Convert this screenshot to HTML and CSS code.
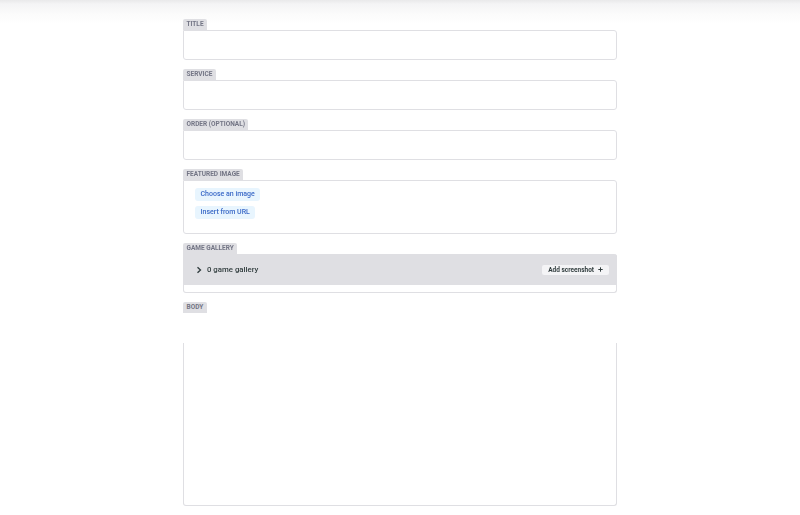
FILE: index.html
```html
<!DOCTYPE html>
<html>
<head>
<meta charset="utf-8">
<link rel="stylesheet" href="styles.css">
</head>
<body>
<div class="top-shadow"></div>
<main class="editor">
  <div class="field">
    <label class="label">Title</label>
    <div class="input"></div>
  </div>
  <div class="field">
    <label class="label">Service</label>
    <div class="input"></div>
  </div>
  <div class="field">
    <label class="label">Order (optional)</label>
    <div class="input"></div>
  </div>
  <div class="field">
    <label class="label">Featured image</label>
    <div class="input image-box">
      <span class="link-btn">Choose an image</span>
      <span class="link-btn">Insert from URL</span>
    </div>
  </div>
  <div class="field">
    <label class="label">Game gallery</label>
    <div class="list-box">
      <div class="list-head">
        <div class="list-title">
          <svg class="chev" viewBox="0 0 8 10" width="6" height="8"><path d="M2 1.2 L6 5 L2 8.8" fill="none" stroke="#313d3e" stroke-width="1.8"/></svg>
          <span>0 game gallery</span>
        </div>
        <span class="add-btn">Add screenshot <svg viewBox="0 0 8 8" width="5" height="5"><path d="M4 0.5 V7.5 M0.5 4 H7.5" stroke="#313d3e" stroke-width="1.6"/></svg></span>
      </div>
    </div>
  </div>
  <div class="field">
    <label class="label">Body</label>
    <div class="body-box">
      <div class="toolbar-space"></div>
      <div class="body-area"></div>
    </div>
  </div>
</main>
</body>
</html>
```
FILE: styles.css
```css
html, body {
  margin: 0;
  padding: 0;
  background: #ffffff;
  font-family: Roboto, "Liberation Sans", sans-serif;
  color: #313d3e;
}
.top-shadow {
  position: fixed;
  top: 0;
  left: 0;
  right: 0;
  height: 24px;
  background: linear-gradient(#e9e9ea 0px, #f4f4f5 4px, #fbfbfb 14px, #ffffff 24px);
  z-index: 1;
}
.editor {
  width: 434px;
  margin: 0 auto;
  padding-top: 19px;
  position: relative;
  z-index: 2;
}
.field {
  display: flex;
  flex-direction: column;
  align-items: flex-start;
  margin-bottom: 9px;
}
.field > .input,
.field > .list-box,
.field > .body-box {
  align-self: stretch;
}
.label {
  display: block;
  height: 11px;
  line-height: 11px;
  padding: 0 3.5px;
  background: #dfdfe3;
  color: #737585;
  font-size: 6.5px;
  font-weight: 700;
  text-transform: uppercase;
  border-radius: 2px 2px 0 0;
}
.input {
  box-sizing: border-box;
  height: 30px;
  border: 1px solid #dfdfe3;
  border-radius: 0 3px 3px 3px;
  background: #fff;
}
.image-box {
  height: 54px;
  display: flex;
  flex-direction: column;
  align-items: flex-start;
  gap: 5px;
  padding: 7px 11px;
}
.link-btn {
  display: block;
  height: 13px;
  line-height: 13px;
  padding: 0 5.5px;
  background: #e8f5fe;
  color: #3a69c7;
  font-size: 7px;
  font-weight: 500;
  border-radius: 3px;
}
.list-box {
  box-sizing: border-box;
  height: 39px;
  border: 1px solid #dfdfe3;
  border-top: 0;
  border-radius: 0 3px 3px 3px;
  background: #fff;
}
.list-head {
  height: 31px;
  margin: 0 -1px;
  background: #dfdfe3;
  border-radius: 0 3px 0 0;
  display: flex;
  align-items: center;
  justify-content: space-between;
  padding: 0 8px 0 13px;
}
.list-title {
  display: flex;
  align-items: center;
  gap: 5px;
  font-size: 7.8px;
  font-weight: 500;
  color: #313d3e;
}
.chev {
  display: block;
}
.add-btn {
  display: inline-flex;
  align-items: center;
  gap: 4px;
  height: 10px;
  padding: 0 6px;
  background: #f4f4f6;
  border-radius: 2px;
  font-size: 6.5px;
  font-weight: 700;
  color: #313d3e;
}
.add-btn svg {
  display: block;
}
.body-box {
  height: 193px;
  display: flex;
  flex-direction: column;
}
.toolbar-space {
  height: 30px;
}
.body-area {
  flex: 1;
  box-sizing: border-box;
  border: 1px solid #dfdfe3;
  border-top: 0;
  border-radius: 0 0 3px 3px;
}
```
